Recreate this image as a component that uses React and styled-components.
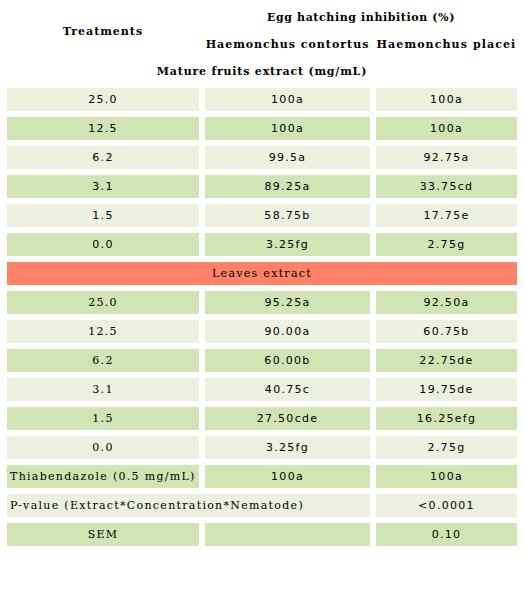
import React from "react";
import styled, { createGlobalStyle } from "styled-components";

const Global = createGlobalStyle`
  html, body { margin: 0; padding: 0; background: #ffffff; }
  body { width: 524px; height: 604px; overflow: hidden; }
`;

const TONES = {
  light: "#ebf1de",
  dark: "#d0e4b4",
  accent: "#ff8268",
  none: "transparent",
};

const Table = styled.table`
  margin: 1px auto 0;
  width: 522px;
  table-layout: fixed;
  border-collapse: separate;
  border-spacing: 6px;
  color: #000;
`;

const HeadRow = styled.tr`
  height: 21px;
`;

const BodyRow = styled.tr`
  height: 23px;
`;

const HeadCell = styled.th`
  padding: 0;
  text-align: center;
  vertical-align: middle;
  white-space: nowrap;
  font-family: "DejaVu Serif", "Liberation Serif", serif;
  font-weight: bold;
  font-size: 11px;
  letter-spacing: ${(p) => p.$spacing || "1px"};
  line-height: 21px;
`;

const Cell = styled.td`
  padding: 0 3px;
  background: ${(p) => TONES[p.$tone || "none"]};
  text-align: ${(p) => p.$align || "center"};
  vertical-align: middle;
  white-space: nowrap;
  overflow: hidden;
  line-height: 23px;
  font-family: ${(p) =>
    p.$serif
      ? '"DejaVu Serif", "Liberation Serif", serif'
      : '"DejaVu Sans", "Liberation Sans", sans-serif'};
  font-size: 11px;
  letter-spacing: 1.3px;
`;

const fruits = [
  ["25.0", "100a", "100a"],
  ["12.5", "100a", "100a"],
  ["6.2", "99.5a", "92.75a"],
  ["3.1", "89.25a", "33.75cd"],
  ["1.5", "58.75b", "17.75e"],
  ["0.0", "3.25fg", "2.75g"],
];

const leaves = [
  ["25.0", "95.25a", "92.50a"],
  ["12.5", "90.00a", "60.75b"],
  ["6.2", "60.00b", "22.75de"],
  ["3.1", "40.75c", "19.75de"],
  ["1.5", "27.50cde", "16.25efg"],
  ["0.0", "3.25fg", "2.75g"],
];

export default function App() {
  return (
    <>
      <Global />
      <Table>
        <colgroup>
          <col style={{ width: 192 }} />
          <col style={{ width: 165 }} />
          <col style={{ width: 141 }} />
        </colgroup>
        <thead>
          <HeadRow>
            <HeadCell rowSpan={2}>Treatments</HeadCell>
            <HeadCell colSpan={2} $spacing="0.6px">
              Egg hatching inhibition (%)
            </HeadCell>
          </HeadRow>
          <HeadRow>
            <HeadCell>Haemonchus contortus</HeadCell>
            <HeadCell $spacing="1.1px">Haemonchus placei</HeadCell>
          </HeadRow>
          <HeadRow>
            <HeadCell colSpan={3} $spacing="0.8px">
              Mature fruits extract (mg/mL)
            </HeadCell>
          </HeadRow>
        </thead>
        <tbody>
          {fruits.map((r, i) => {
            const tone = i % 2 === 0 ? "light" : "dark";
            return (
              <BodyRow key={"f" + i}>
                <Cell $tone={tone}>{r[0]}</Cell>
                <Cell $tone={tone}>{r[1]}</Cell>
                <Cell $tone={tone}>{r[2]}</Cell>
              </BodyRow>
            );
          })}
          <BodyRow>
            <Cell $tone="accent" $serif colSpan={3}>
              Leaves extract
            </Cell>
          </BodyRow>
          {leaves.map((r, i) => {
            const tone = i % 2 === 0 ? "dark" : "light";
            return (
              <BodyRow key={"l" + i}>
                <Cell $tone={tone} $serif>
                  {r[0]}
                </Cell>
                <Cell $tone={tone}>{r[1]}</Cell>
                <Cell $tone={tone}>{r[2]}</Cell>
              </BodyRow>
            );
          })}
          <BodyRow>
            <Cell $tone="dark" $serif $align="left">
              Thiabendazole (0.5 mg/mL)
            </Cell>
            <Cell $tone="dark">100a</Cell>
            <Cell $tone="dark">100a</Cell>
          </BodyRow>
          <BodyRow>
            <Cell $tone="light" $serif $align="left" colSpan={2}>
              P-value (Extract*Concentration*Nematode)
            </Cell>
            <Cell $tone="light">&lt;0.0001</Cell>
          </BodyRow>
          <BodyRow>
            <Cell $tone="dark" $serif>
              SEM
            </Cell>
            <Cell $tone="dark" />
            <Cell $tone="dark">0.10</Cell>
          </BodyRow>
        </tbody>
      </Table>
    </>
  );
}
